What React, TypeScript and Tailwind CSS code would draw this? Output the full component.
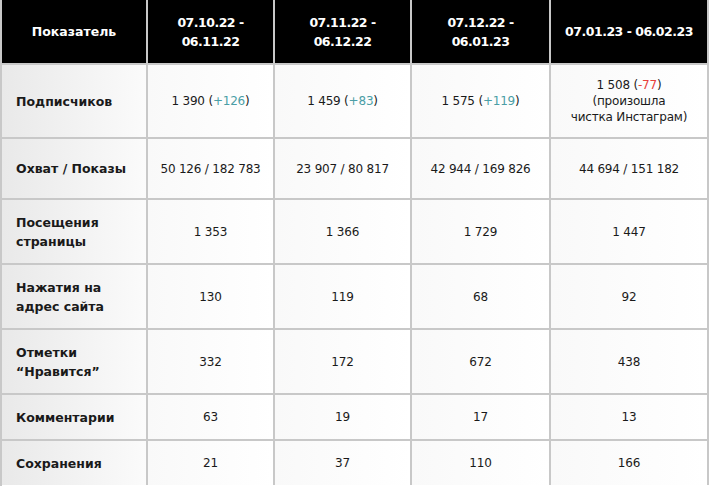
import React from "react";

type Row = { label: React.ReactNode; values: React.ReactNode[]; h: string };

const teal = (t: string) => <span className="text-[#4b9ea6]">{t}</span>;
const red = (t: string) => <span className="text-[#e8413a]">{t}</span>;

const rows: Row[] = [
  {
    label: "Подписчиков",
    h: "h-[74px]",
    values: [
      <>1 390 ({teal("+126")})</>,
      <>1 459 ({teal("+83")})</>,
      <>1 575 ({teal("+119")})</>,
      <span className="leading-[16px]">
        1 508 ({red("-77")})
        <br />
        (произошла
        <br />
        чистка Инстаграм)
      </span>,
    ],
  },
  { label: "Охват / Показы", h: "h-[61px]", values: ["50 126 / 182 783", "23 907 / 80 817", "42 944 / 169 826", "44 694 / 151 182"] },
  { label: <>Посещения<br />страницы</>, h: "h-[65px]", values: ["1 353", "1 366", "1 729", "1 447"] },
  { label: <>Нажатия на<br />адрес сайта</>, h: "h-[65px]", values: ["130", "119", "68", "92"] },
  { label: <>Отметки<br />“Нравится”</>, h: "h-[65px]", values: ["332", "172", "672", "438"] },
  { label: "Комментарии", h: "h-[46px]", values: ["63", "19", "17", "13"] },
  { label: "Сохранения", h: "h-[46px]", values: ["21", "37", "110", "166"] },
];

const headers = [
  <>07.10.22 -<br />06.11.22</>,
  <>07.11.22 -<br />06.12.22</>,
  <>07.12.22 -<br />06.01.23</>,
  <>07.01.23 - 06.02.23</>,
];

const cols = "grid grid-cols-[146px_127px_137px_139px_158px]";

export default function App() {
  return (
    <div className="w-[711px] h-[486px] bg-white font-['DejaVu_Sans',sans-serif] text-[#1a1a1a]">
      <div className="w-[708px] border-l-2 border-[#c8c8c8]">
        <div className={`${cols} h-[63px] bg-black text-white font-bold text-[12.5px] leading-[19px]`}>
          <div className="flex items-center justify-center border-r-2 border-[#c8c8c8]">Показатель</div>
          {headers.map((h, i) => (
            <div key={i} className="flex items-center justify-center text-center tracking-[-0.5px] border-r-2 border-[#c8c8c8]">
              {h}
            </div>
          ))}
        </div>
        {rows.map((r, i) => (
          <div key={i} className={`${cols} ${r.h}`}>
            <div className="flex items-center pl-[14px] font-bold text-[12.5px] leading-[19px] border-r-2 border-t-2 border-[#c8c8c8] bg-gradient-to-r from-[#e9e9e9] to-[#fbfbfb]">
              <div>{r.label}</div>
            </div>
            {r.values.map((v, j) => (
              <div
                key={j}
                className="flex items-center justify-center text-center text-[12px] tracking-[-0.2px] border-r-2 border-t-2 border-[#c8c8c8] bg-gradient-to-r from-[#f9f9f9] to-white"
              >
                {v}
              </div>
            ))}
          </div>
        ))}
        <div className="h-[1px]" />
      </div>
    </div>
  );
}
